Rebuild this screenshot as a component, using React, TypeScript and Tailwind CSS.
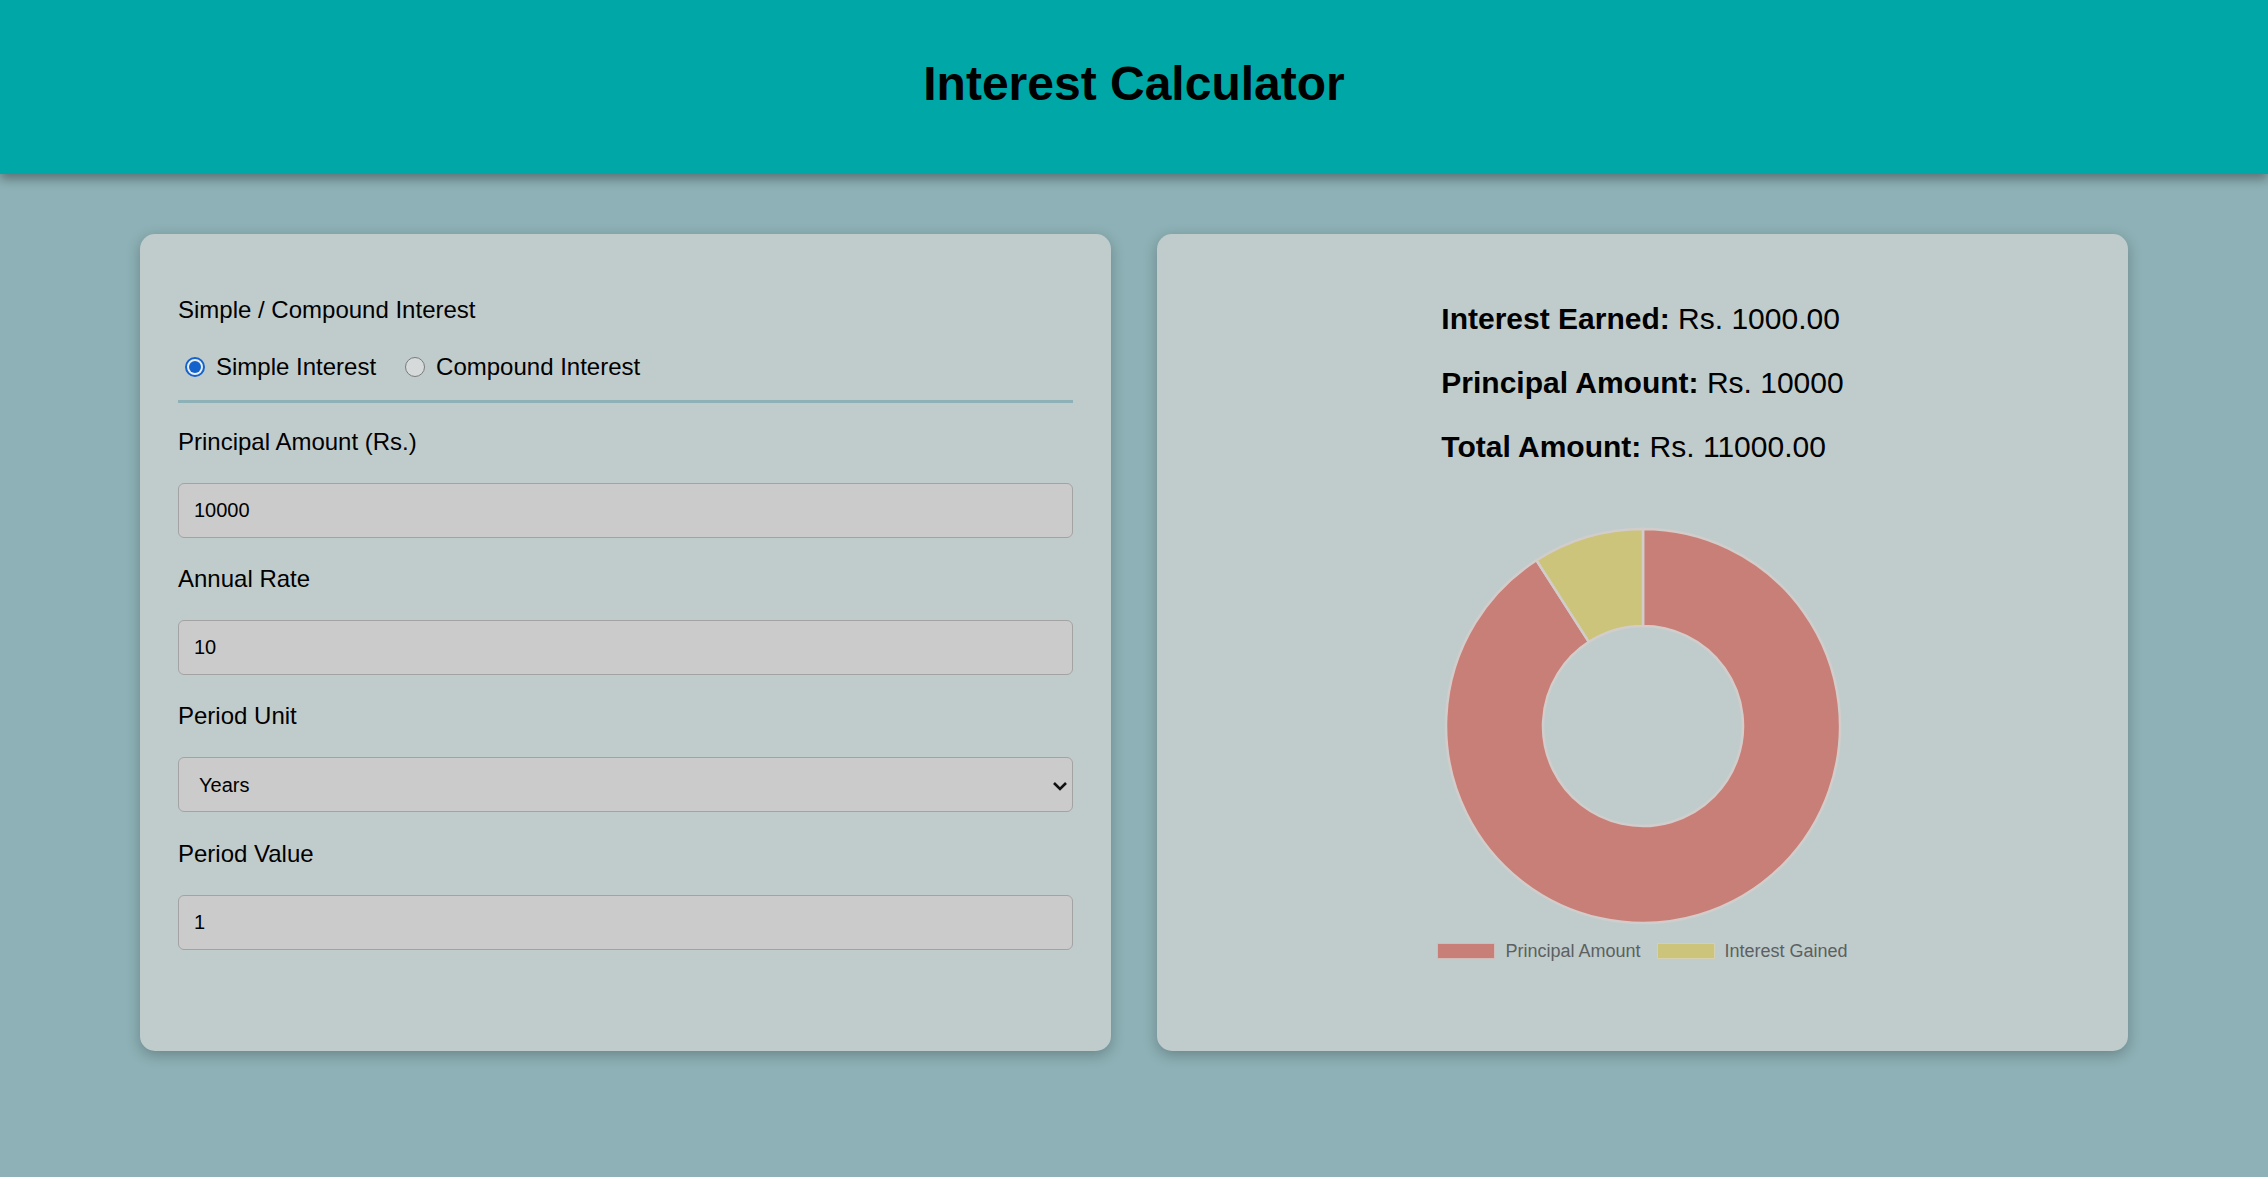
import React from 'react'

const font = { fontFamily: '"Liberation Sans", Arial, sans-serif' }

function Radio({ checked, label }: { checked?: boolean; label: string }) {
    return (
        <label className="flex items-center h-[28px]">
            {checked ? (
                <span className="ml-[7px] w-[20px] h-[20px] rounded-full border-[2px] border-[#1462cc] bg-[#e9eef6] flex items-center justify-center">
                    <span className="w-[12px] h-[12px] rounded-full bg-[#1462cc]" />
                </span>
            ) : (
                <span className="ml-[7px] w-[20px] h-[20px] rounded-full border-[1.5px] border-[#7a7a7a] bg-[#d6dada]" />
            )}
            <span className="ml-[11px] text-[24px] leading-[28px] text-black">{label}</span>
        </label>
    )
}

function Field({ label, value }: { label: string; value: string }) {
    return (
        <div className="flex flex-col">
            <span className="text-[24px] leading-[28px] text-black">{label}</span>
            <input
                defaultValue={value}
                className="mt-[27px] h-[55px] w-full rounded-[6px] border-[1.5px] border-[#a3a3a3] bg-[#cbcbcb] pl-[15px] text-[20px] text-black outline-none"
                style={font}
            />
        </div>
    )
}

export default function App() {
    return (
        <div className="min-h-[1177px] bg-[#8db1b6]" style={font}>
            <header className="h-[174px] bg-[#00a7a7] flex items-center justify-center pb-[6px] shadow-[0_5px_10px_rgba(0,0,0,0.35)] relative">
                <h1 className="text-[48px] font-bold text-black">Interest Calculator</h1>
            </header>

            <main className="grid grid-cols-2 gap-[46px] px-[140px] pt-[60px]">
                {/* form */}
                <div className="bg-[#c0cccc] rounded-[15px] shadow-[0_4px_14px_rgba(0,0,0,0.25)] pt-[62px] px-[38px] pb-[98px]">
                    <span className="block text-[24px] leading-[28px] text-black">Simple / Compound Interest</span>
                    <div className="mt-[29px] pb-[19px] border-b-[3px] border-[#8db1b6] flex items-center gap-[22px]">
                        <Radio checked label="Simple Interest" />
                        <Radio label="Compound Interest" />
                    </div>
                    <div className="mt-[25px] flex flex-col gap-[27px]">
                        <Field label="Principal Amount (Rs.)" value="10000" />
                        <Field label="Annual Rate" value="10" />
                        <div className="flex flex-col">
                            <span className="text-[24px] leading-[28px] text-black">Period Unit</span>
                            <div className="relative mt-[27px]">
                                <select
                                    defaultValue="Years"
                                    className="appearance-none h-[55px] w-full rounded-[6px] border-[1.5px] border-[#a3a3a3] bg-[#cbcbcb] pl-[20px] text-[20px] text-black outline-none"
                                    style={font}
                                >
                                    <option>Years</option>
                                    <option>Months</option>
                                    <option>Days</option>
                                </select>
                                <svg className="absolute right-[5px] top-[24px]" width="16" height="10" viewBox="0 0 16 10">
                                    <path d="M2 2 L8 8 L14 2" fill="none" stroke="#111" strokeWidth="2.6" />
                                </svg>
                            </div>
                        </div>
                        <div className="mt-[1px]">
                            <Field label="Period Value" value="1" />
                        </div>
                    </div>
                </div>

                {/* result */}
                <div className="bg-[#c0cccc] rounded-[15px] shadow-[0_4px_14px_rgba(0,0,0,0.25)] pt-[68px] pb-[90px] flex flex-col items-center">
                    <div className="w-fit text-[30px] leading-[34px] text-black">
                        <p className="mb-[30px]"><b>Interest Earned:</b> Rs. 1000.00</p>
                        <p className="mb-[30px]"><b>Principal Amount:</b> Rs. 10000</p>
                        <p><b>Total Amount:</b> Rs. 11000.00</p>
                    </div>
                    <svg className="mt-[62px]" width="400" height="400" viewBox="0 0 400 400">
                        <path
                            d="M200 3 A197 197 0 1 1 93.5 34.3 L145.9 115.9 A100 100 0 1 0 200 100 Z"
                            fill="#c87f78"
                            stroke="#d2cdcb"
                            strokeWidth="2.5"
                        />
                        <path
                            d="M93.5 34.3 A197 197 0 0 1 200 3 L200 100 A100 100 0 0 0 145.9 115.9 Z"
                            fill="#cbc47a"
                            stroke="#d2cdcb"
                            strokeWidth="2.5"
                        />
                    </svg>
                    <div className="mt-[15px] flex items-center text-[18px] leading-[20px] text-[#5c6061]">
                        <span className="w-[58px] h-[16px] bg-[#c87f78] border border-[#d2bcb9]" />
                        <span className="ml-[10px]">Principal Amount</span>
                        <span className="ml-[16px] w-[58px] h-[16px] bg-[#cbc47a] border border-[#d4d0b0]" />
                        <span className="ml-[10px]">Interest Gained</span>
                    </div>
                </div>
            </main>
        </div>
    )
}
